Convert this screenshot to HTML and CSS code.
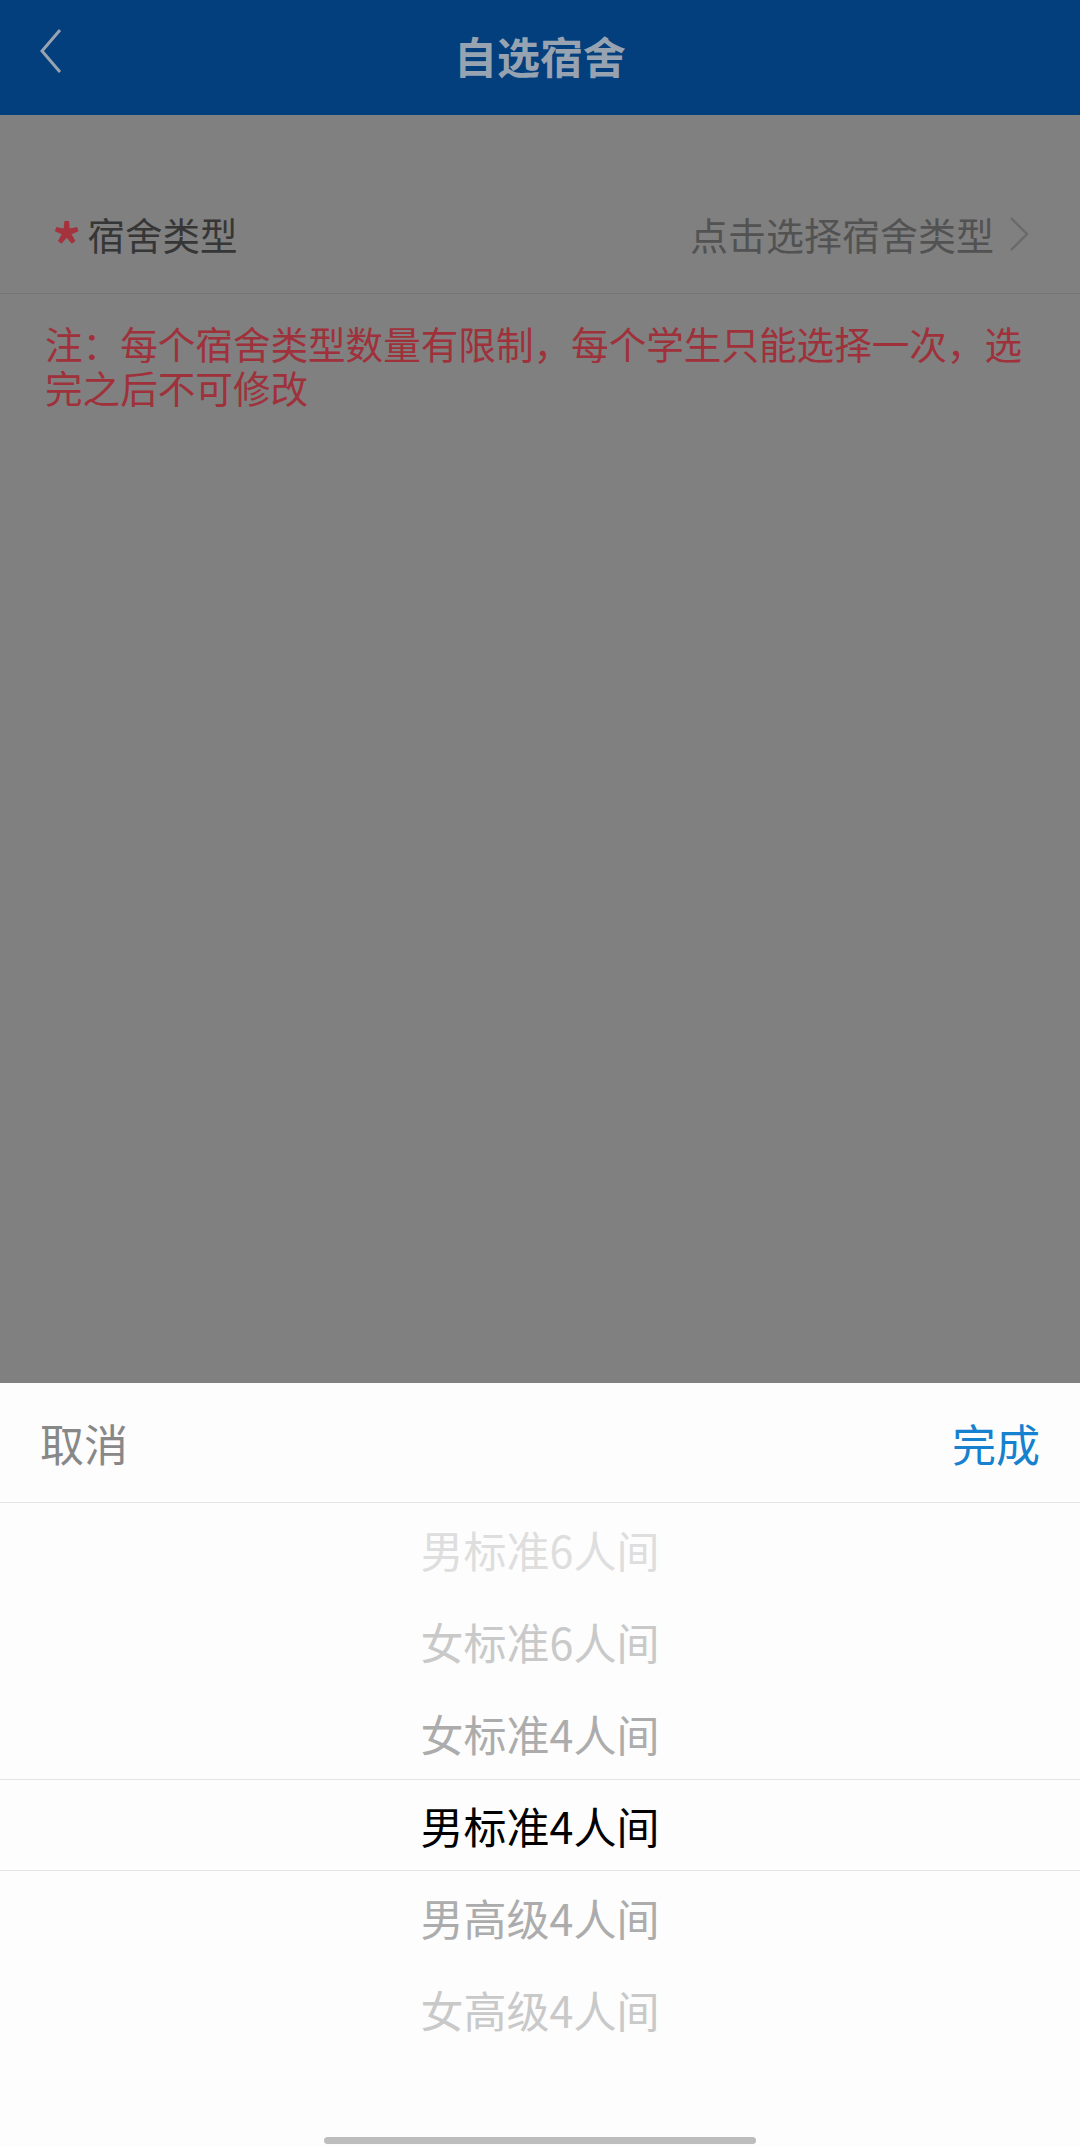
FILE: index.html
```html
<!DOCTYPE html>
<html lang="zh-CN">
<head>
<meta charset="utf-8">
<title>自选宿舍</title>
<link rel="stylesheet" href="styles.css">
</head>
<body>
<div class="page">
  <header class="navbar">
    <svg class="back" width="30" height="46" viewBox="0 0 30 46"><polyline points="24,2 6,23 24,44" fill="none" stroke="#97a3b0" stroke-width="3"/></svg>
    <h1 class="title">自选宿舍</h1>
  </header>
  <div class="form-row">
    <div class="label"><span class="star">*</span>宿舍类型</div>
    <div class="value">点击选择宿舍类型
      <svg class="arrow" width="22" height="36" viewBox="0 0 22 36"><polyline points="3,2 19,18 3,34" fill="none" stroke="#6a6a6a" stroke-width="2.4"/></svg>
    </div>
  </div>
  <p class="note">注：每个宿舍类型数量有限制，每个学生只能选择一次，选完之后不可修改</p>
</div>
<div class="sheet">
  <div class="sheet-head">
    <span class="cancel">取消</span>
    <span class="done">完成</span>
  </div>
  <div class="picker">
    <div class="item c1">男标准6人间</div>
    <div class="item c2">女标准6人间</div>
    <div class="item c3">女标准4人间</div>
    <div class="item sel">男标准4人间</div>
    <div class="item c3">男高级4人间</div>
    <div class="item c2">女高级4人间</div>
  </div>
  <div class="home-bar"></div>
</div>
</body>
</html>
```
FILE: styles.css
```css
* { box-sizing: border-box; }
html, body { margin: 0; padding: 0; }
body {
  width: 1080px;
  height: 2147px;
  overflow: hidden;
  background: #808080;
  font-family: "Noto Sans CJK SC", "Noto Sans", sans-serif;
  position: relative;
}
.page { display: flex; flex-direction: column; }
.navbar {
  height: 115px;
  background: #033e7d;
  display: flex;
  align-items: center;
  justify-content: center;
  position: relative;
}
.back { position: absolute; left: 36px; top: 28px; }
.title {
  margin: 0;
  font-size: 43px;
  font-weight: 700;
  color: #97a3b0;
  line-height: 1;
  margin-top: -4px;
}
.form-row {
  margin-top: 60px;
  height: 119px;
  border-bottom: 1.5px solid #747474;
  display: flex;
  align-items: center;
  justify-content: space-between;
  padding: 0 50px 2px 52px;
}
.label {
  font-size: 37.5px;
  color: #363636;
  display: flex;
  align-items: center;
}
.star {
  color: #a4333d;
  font-size: 58px;
  font-weight: 700;
  margin-right: 6px;
  line-height: 40px;
  height: 40px;
  position: relative;
  top: 10px;
}
.value {
  font-size: 38px;
  color: #525252;
  display: flex;
  align-items: center;
  gap: 14px;
}
.arrow { margin-top: 2px; }
.note {
  margin: 27px 0 0;
  padding: 0 45px;
  font-size: 37.6px;
  line-height: 44px;
  color: #9f313b;
}
.sheet {
  position: absolute;
  left: 0;
  right: 0;
  bottom: 0;
  height: 764px;
  background: #fdfdfd;
  display: flex;
  flex-direction: column;
}
.sheet-head {
  height: 120px;
  border-bottom: 1.5px solid #e6e6e6;
  display: flex;
  align-items: center;
  justify-content: space-between;
  padding: 0 40px;
  font-size: 44px;
}
.cancel { color: #888888; }
.done { color: #1681cf; }
.picker { display: flex; flex-direction: column; }
.item {
  height: 92px;
  display: flex;
  align-items: center;
  justify-content: center;
  font-size: 43px;
}
.c1 { color: #dedede; }
.c2 { color: #c9c9c9; }
.c3 { color: #acacac; }
.sel {
  color: #000;
  border-top: 1.5px solid #e4e4e4;
  border-bottom: 1.5px solid #e4e4e4;
}
.home-bar {
  position: absolute;
  left: 324px;
  width: 432px;
  top: 754px;
  height: 7px;
  border-radius: 4px;
  background: #bdbdbd;
}
```
